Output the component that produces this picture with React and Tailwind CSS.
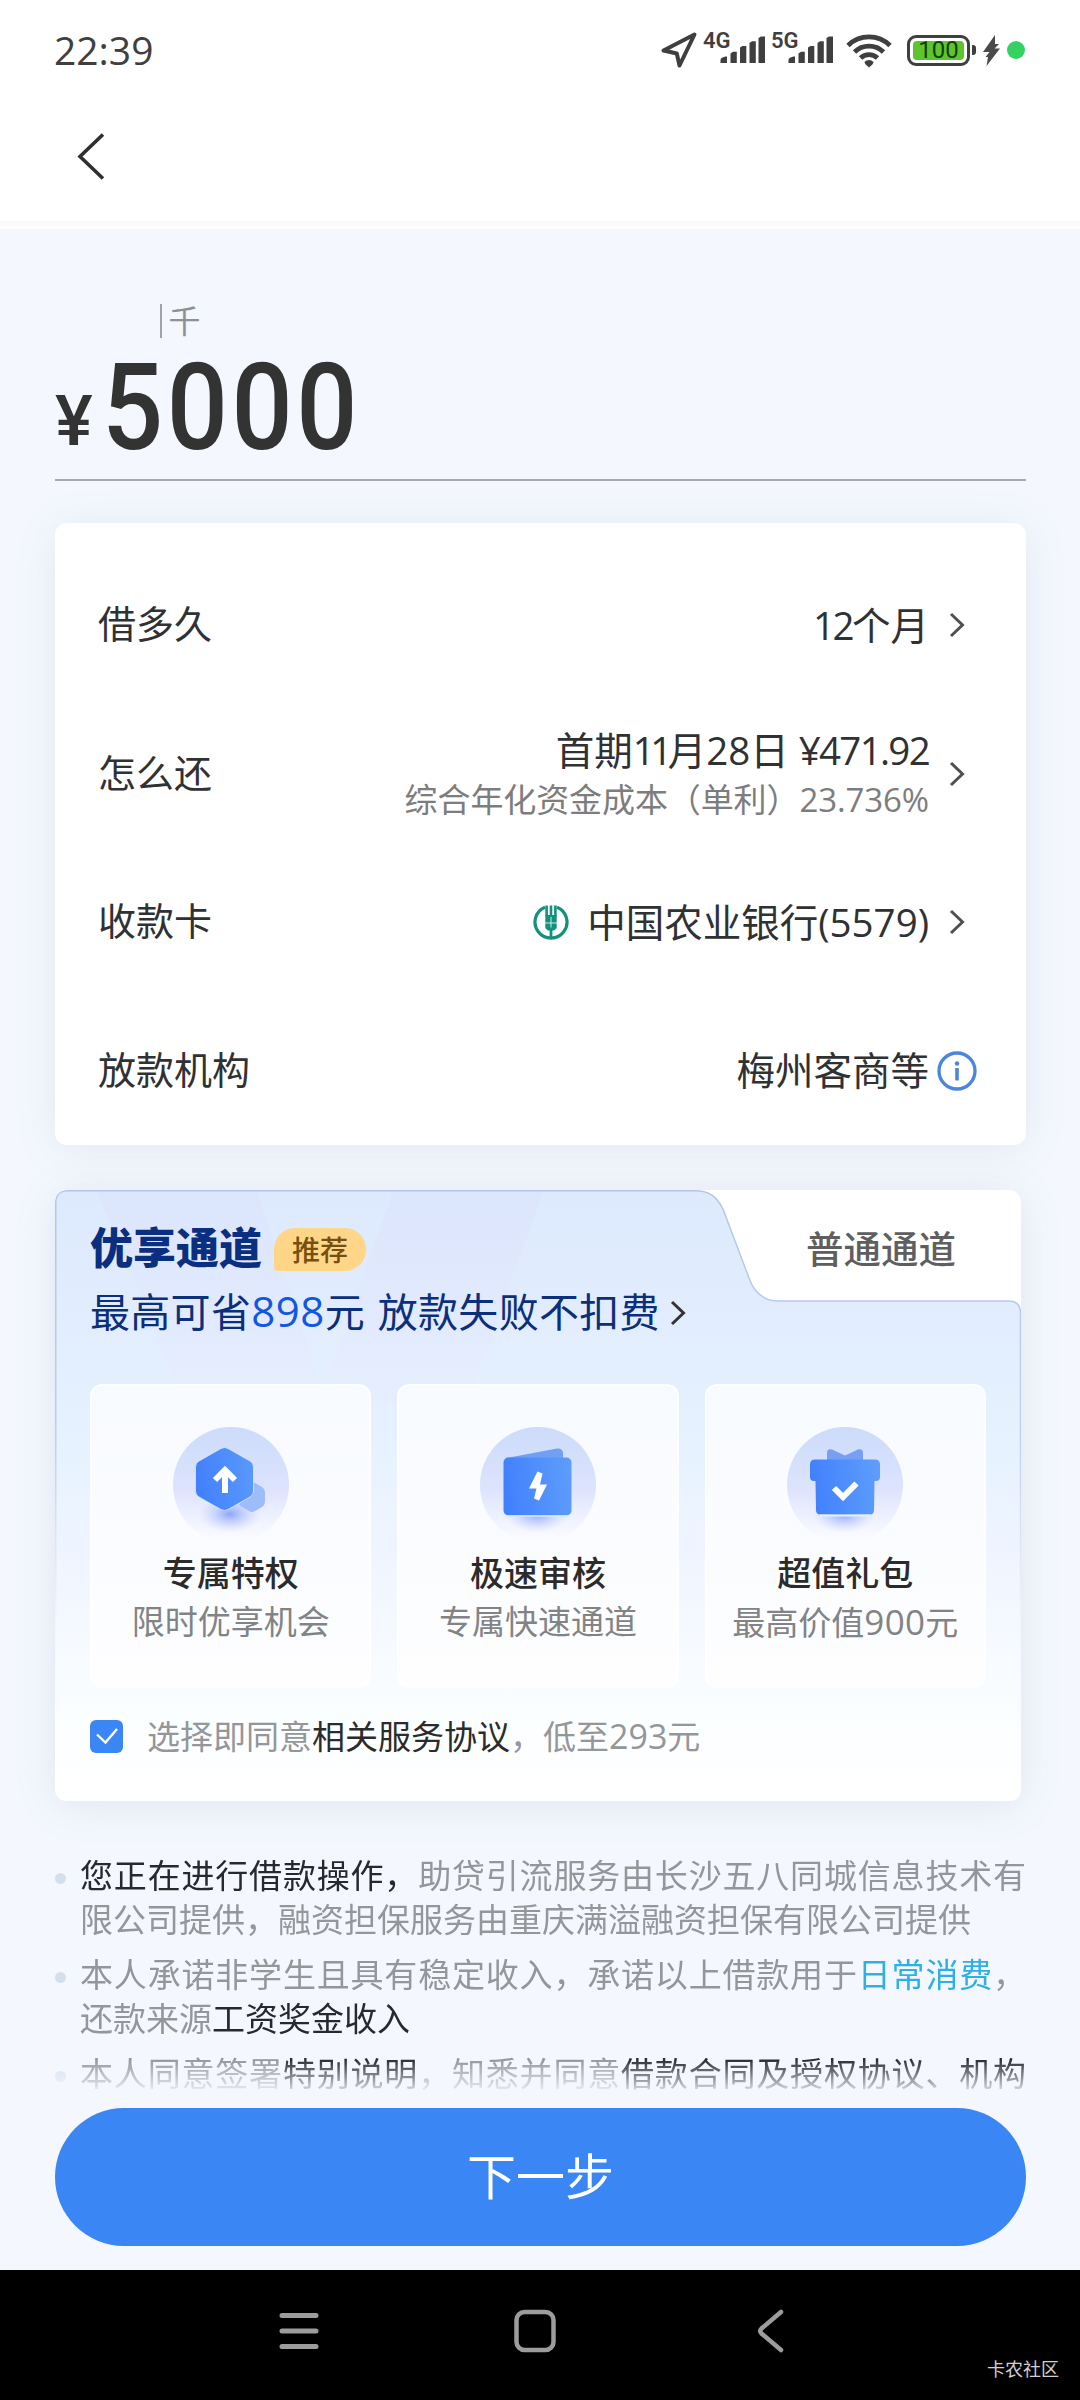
import { useState } from "react";

const terms = [
  {
    label: "借多久",
    value: (
      <>
        <span className="tracking-[-2.500px]">12</span>个月
      </>
    ),
  },
  {
    label: "怎么还",
    value: (
      <>
        首期<span className="tracking-[-4.500px]">11</span>月28日 <span className="tracking-[-1.700px]">¥471.92</span>
      </>
    ),
    note: "综合年化资金成本（单利）23.736%",
  },
  { label: "收款卡", value: "中国农业银行(5579)", bank: true },
  { label: "放款机构", value: "梅州客商等", info: true },
];

const perks = [
  { title: "专属特权", desc: "限时优享机会", Icon: UpgradeIcon },
  { title: "极速审核", desc: "专属快速通道", Icon: FlashIcon },
  {
    title: "超值礼包",
    desc: (
      <>
        最高价值<span className="text-[35px] tracking-[0.300px]">900</span>元
      </>
    ),
    Icon: GiftIcon,
  },
];

function Chevron({ className }) {
  return (
    <svg className={className} width="16" height="26" viewBox="0 0 16 26" fill="none">
      <path d="M2 2l11.500 11L2 24" stroke="currentColor" strokeWidth="3" />
    </svg>
  );
}

function SignalIcon() {
  return (
    <svg width="46" height="28" viewBox="0 0 46 28" fill="#3f3f3f">
      <path d="M.5 27v-3q0-2 2-2.600l3-.8h1.500V27z" />
      <path d="M10.500 27V17.500l2.500-1.700h3.800V27z" />
      <path d="M20 27V11.500L22.500 10h3.800v17z" />
      <path d="M29.500 27V7L32 5.300h3.800V27z" />
      <path d="M38.500 27V2L41 .5h4V27z" />
    </svg>
  );
}

function StatusBar() {
  return (
    <div className="flex h-[100px] items-center justify-between pl-[54px] pr-[55px] text-[#3f3f3f]">
      <span className="mb-[2px] text-[39px] leading-none font-medium">22:39</span>
      <div className="flex items-center">
        <svg width="38" height="38" viewBox="0 0 38 38" fill="none" className="mr-[5px]">
          <path d="M34.500 3.500L3.500 19.500l13.300 3L19.500 34.500z" stroke="#3f3f3f" strokeWidth="4" strokeLinejoin="round" />
        </svg>
        <span className="mb-[19px] -mr-[12px] w-[29px] font-['Roboto',sans-serif] text-[22px] leading-none font-semibold">
          4G
        </span>
        <SignalIcon />
        <span className="mb-[19px] ml-[5px] -mr-[12px] w-[29px] font-['Roboto',sans-serif] text-[22px] leading-none font-semibold">
          5G
        </span>
        <SignalIcon />
        <svg width="46" height="36" viewBox="0 0 46 36" fill="none" className="ml-[12px]">
          <g stroke="#3f3f3f" strokeWidth="4.800">
            <path d="M2 13.500a30 30 0 0 1 42 0" />
            <path d="M8.500 20a21 21 0 0 1 29 0" />
            <path d="M14.500 26a12.500 12.500 0 0 1 17 0" />
          </g>
          <path d="M18.500 30a6 6 0 0 1 9 0q0 2-4.500 5.500q-4.500-3.500-4.500-5.500z" fill="#3f3f3f" />
        </svg>
        <div className="ml-[15px] flex h-[31px] w-[63px] items-center rounded-[9px] border-[3.500px] border-[#3f3f3f] p-[3px]">
          <div className="flex h-full w-full items-center justify-center rounded-[4px] bg-[#5fc52e] font-['Roboto',sans-serif] text-[24px] leading-none text-[#123f08]">
            100
          </div>
        </div>
        <div className="ml-[2px] h-[10px] w-[4px] rounded-r-[3px] bg-[#3f3f3f]" />
        <svg width="18" height="31" viewBox="0 0 18 31" className="ml-[7px]">
          <path d="M12 0L0 17h6.500L2.500 22h2.500L3.500 31L17 13.500h-5.500L16 9h-4z" fill="#4a4a4a" />
        </svg>
        <div className="ml-[6px] size-[18px] rounded-full bg-[#34d263]" />
      </div>
    </div>
  );
}

function BankLogo() {
  return (
    <svg width="36" height="36" viewBox="0 0 36 36" fill="none" className="mr-[18px]">
      <path d="M12 3.200a16 16 0 1 0 12 0" stroke="#12917b" strokeWidth="3.200" />
      <path d="M18 22v12" stroke="#12917b" strokeWidth="2.800" />
      <path d="M12.300 1.500h2.600v10.500h-2.600zM16.700 1.500h2.600v10.500h-2.600zM21.100 1.500h2.600v10.500h-2.600z" fill="#12917b" />
      <path d="M12.300 11h11.400v13l-2.500 2.500h-6.400l-2.500-2.500z" fill="#12917b" />
      <path d="M12 19h12M18 13v10.500" stroke="#e8f6f3" strokeWidth="0.900" />
    </svg>
  );
}

function InfoIcon() {
  return (
    <svg width="40" height="40" viewBox="0 0 40 40" fill="none" className="-mr-px ml-[8px]">
      <circle cx="20" cy="20" r="18" stroke="#4a86dc" strokeWidth="3.300" />
      <circle cx="20" cy="12.500" r="2.200" fill="#4a86dc" />
      <path d="M20 17v12.500" stroke="#4a86dc" strokeWidth="3.600" />
    </svg>
  );
}

function IconBase({ id, children }) {
  return (
    <svg width="116" height="116" viewBox="0 0 116 116" fill="none">
      <defs>
        <linearGradient id={`${id}-disc`} x1="58" y1="0" x2="58" y2="112" gradientUnits="userSpaceOnUse">
          <stop stopColor="#cbdcfa" />
          <stop offset="0.550" stopColor="#dde3fd" />
          <stop offset="1" stopColor="#fbfcff" />
        </linearGradient>
        <linearGradient id={`${id}-face`} x1="24" y1="60" x2="92" y2="50" gradientUnits="userSpaceOnUse">
          <stop stopColor="#4180fd" />
          <stop offset="1" stopColor="#5e9dfb" />
        </linearGradient>
        <radialGradient id={`${id}-glow`}>
          <stop stopColor="#8ea5fb" />
          <stop offset="1" stopColor="#c9d3fd" stopOpacity="0" />
        </radialGradient>
      </defs>
      <circle cx="58" cy="58" r="58" fill={`url(#${id}-disc)`} />
      <ellipse cx="57" cy="87" rx="32" ry="19" fill={`url(#${id}-glow)`} />
      {children}
    </svg>
  );
}

function UpgradeIcon() {
  return (
    <IconBase id="upgrade">
      <path d="M80 55l9 5q3 2 3 5v9q0 4-3 6l-7 4q-3 2-6 0l-10-6z" fill="#9dbcfa" />
      <path
        d="M48 21.500q3.500-2 7 0l22 12.500q3.500 2 3.500 6v24q0 4-3.500 6l-22 12.500q-3.500 2-7 0L26 70q-3.500-2-3.500-6V40q0-4 3.500-6z"
        fill="url(#upgrade-face)"
        stroke="#d9e8ff"
        strokeWidth="0.800"
      />
      <path d="M52 66V45M42 53l10-10l10 10" stroke="#fff" strokeWidth="6" />
    </IconBase>
  );
}

function FlashIcon() {
  return (
    <IconBase id="flash">
      <path d="M26 31l51-9.500q5-.5 6 4V40H26z" fill="#719ff3" />
      <rect x="23.500" y="30.500" width="68" height="58" rx="5" fill="url(#flash-face)" />
      <path d="M27 89h61" stroke="#dcebff" strokeWidth="1.500" />
      <path d="M57.500 44.500l5 2l-2.500 11h7L59 73.500l-5-2l2.500-10H49z" fill="#fff" />
    </IconBase>
  );
}

function GiftIcon() {
  return (
    <IconBase id="gift">
      <path d="M40 33V26q0-5 5-3.500l13 6l13-6q5-1.500 5 3.500v7z" fill="#769ff5" />
      <path
        d="M28 32.500h60q5 0 5 5V50q0 4-4 4h-1.500l-.5 29q0 4.500-4.500 4.500h-49q-4.500 0-4.500-4.500L28.500 54H27q-4 0-4-4V37.500q0-5 5-5z"
        fill="url(#gift-face)"
      />
      <path d="M33 88.500h50" stroke="#e4f3ff" strokeWidth="2" />
      <path d="M47 61l9 9l13.500-13.500" stroke="#fff" strokeWidth="6" />
    </IconBase>
  );
}

// Folder-shaped background: the active tab flows into the body of the panel
function PanelShape() {
  const outline =
    "M.75 611V12.750q0-12 12-12H640C655 .75 662 7 668 19L694 88Q702 111 724 111H953q12.500 0 12.500 12V611";
  return (
    <svg className="absolute inset-0" width="966" height="611" viewBox="0 0 966 611" fill="none">
      <defs>
        <linearGradient id="panel-fill" x1="0" y1="0" x2="0" y2="611" gradientUnits="userSpaceOnUse">
          <stop stopColor="#dde9fd" />
          <stop offset="0.420" stopColor="#e6f2ff" />
          <stop offset="0.650" stopColor="#f2f6ff" />
          <stop offset="0.850" stopColor="#fbfeff" />
          <stop offset="1" stopColor="#ffffff" />
        </linearGradient>
        <linearGradient id="panel-line" x1="0" y1="0" x2="0" y2="611" gradientUnits="userSpaceOnUse">
          <stop stopColor="#b3c6e4" />
          <stop offset="0.400" stopColor="#bccfee" />
          <stop offset="0.700" stopColor="#f0f5ff" />
          <stop offset="0.900" stopColor="#ffffff" />
        </linearGradient>
        <linearGradient id="panel-ray" x1="0" y1="0" x2="0" y2="215" gradientUnits="userSpaceOnUse">
          <stop stopColor="#dae2fc" />
          <stop offset="1" stopColor="#e7edfe" />
        </linearGradient>
      </defs>
      <path d={outline} fill="url(#panel-fill)" />
      <path d="M42 2H202L272 215H130z" fill="url(#panel-ray)" fillOpacity="0.600" />
      <path d="M338 2H488L412 215H262z" fill="url(#panel-ray)" fillOpacity="0.600" />
      <path d={outline} stroke="url(#panel-line)" strokeWidth="1.500" />
    </svg>
  );
}

function Notice({ lines }) {
  return (
    <li className="mb-[11px] flex items-start text-[33px] leading-[44px] text-[#949699]">
      <span className="mt-[19px] mr-[14px] size-[11px] shrink-0 rounded-full bg-[#d5dfec]" />
      <div className="flex-1 whitespace-nowrap">{lines}</div>
    </li>
  );
}

export default function App() {
  const [agreed, setAgreed] = useState(true);

  return (
    <div className="flex h-[2400px] w-[1080px] flex-col overflow-hidden bg-white font-['Open_Sans','Noto_Sans_CJK_SC',sans-serif] text-[#303133]">
      <StatusBar />
      <header className="h-[121px] pt-[32px] pl-[76px]">
        <svg width="30" height="50" viewBox="0 0 30 50" fill="none">
          <path d="M27 2.500L4 24.500L27 46.500" stroke="#303030" strokeWidth="3.600" />
        </svg>
      </header>
      <div className="h-[8px] bg-linear-to-b from-[#f8f8fa] to-white" />

      <main className="flex min-h-0 flex-1 flex-col bg-[#f4f8fe] pr-[54px] pl-[55px]">
        {/* Loan amount */}
        <section className="flex h-[252px] flex-col border-b-2 border-[#a5a8ae] pt-[70px]">
          <div className="ml-[105px] flex h-[44px] items-center text-[32px] leading-none text-[#8d9094]">
            <span className="mr-[7px] h-[34px] w-[1.500px] bg-[#a0a3a8]" />千
          </div>
          <div className="mt-[15px] flex items-baseline font-['Roboto',sans-serif] font-medium leading-[100px] text-[#333]">
            <span className="relative -top-[4px] inline-block w-[47px] text-[71px]">¥</span>
            <span className="inline-block origin-left scale-x-[0.890] text-[121px] tracking-[4px]">5000</span>
          </div>
        </section>

        {/* Loan terms */}
        <section className="mt-[42px] rounded-[12px] bg-white pt-[28px] pr-[50px] pl-[43px] shadow-[0_4px_44px_rgba(80,90,130,0.100)]">
          {terms.map((term) => (
            <div key={term.label} className="flex h-[148.500px] items-center justify-between">
              <span className="pb-[4px] text-[38px] leading-none">{term.label}</span>
              <div className="flex items-center">
                {term.bank && <BankLogo />}
                <div className="flex flex-col items-end">
                  <span className="text-[38.500px] leading-[49px]">{term.value}</span>
                  {term.note && (
                    <span className="-mb-[2px] text-[33px] leading-[49px] tracking-[-0.100px] text-[#7d7d7d]">{term.note}</span>
                  )}
                </div>
                {term.info ? <InfoIcon /> : <Chevron className="mr-[11px] ml-[20px] text-[#505050]" />}
              </div>
            </div>
          ))}
        </section>

        {/* Channel panel */}
        <section className="relative mt-[45px] h-[611px] w-[966px] shrink-0 overflow-hidden rounded-[12px] bg-white shadow-[0_4px_44px_rgba(80,90,130,0.120)]">
          <PanelShape />
          <div className="relative px-[35px]">
            <div className="flex h-[194px] items-start justify-between">
              <div className="pt-[34px]">
                <div className="flex h-[50px] items-center">
                  <h2 className="pb-[4px] text-[43px] leading-none font-black text-[#0b2f80]">优享通道</h2>
                  <span className="mt-px ml-[12px] flex h-[43px] w-[92px] items-center justify-center rounded-[21px] rounded-bl-[4px] bg-[#ffd588] text-[28px] leading-none font-medium text-[#76500f]">
                    推荐
                  </span>
                </div>
                <div className="mt-[11px] flex h-[52px] items-center text-[40px] leading-none tracking-[0.300px] text-[#0b2f7a]">
                  <span>
                    最高可省<span className="text-[42px] tracking-[0.500px] text-[#1257e0]">898</span>元
                    <span className="ml-[2px]"> 放款失败不扣费</span>
                  </span>
                  <Chevron className="mt-[4px] ml-[10px] text-[#333]" />
                </div>
              </div>
              <div className="mt-[36px] mr-[30px] text-[37.500px] leading-[46px] font-medium text-[#5f5f5f]">普通通道</div>
            </div>

            <div className="grid grid-cols-3 gap-[26px]">
              {perks.map(({ title, desc, Icon }) => (
                <div
                  key={title}
                  className="flex h-[304px] flex-col items-center rounded-[12px] border-2 border-white/80 bg-linear-to-b from-[#f7faff] to-[#fefeff] pt-[41px]"
                >
                  <Icon />
                  <p className="mt-[5px] text-[34px] leading-[50px] font-medium text-[#2b2b2b]">{title}</p>
                  <p className="text-[33px] leading-[48px] text-[#828385]">{desc}</p>
                </div>
              ))}
            </div>

            <label className="mt-[23px] flex h-[50px] items-center text-[33px] leading-none text-[#949699]">
              <input
                type="checkbox"
                className="peer sr-only"
                checked={agreed}
                onChange={(e) => setAgreed(e.target.checked)}
              />
              <span className="mr-[24px] flex size-[33px] items-center justify-center rounded-[6px] bg-[#3a86f5]">
                {agreed && (
                  <svg width="24" height="18" viewBox="0 0 24 18" fill="none">
                    <path d="M2 7.500l8.500 8L22 2" stroke="#fff" strokeWidth="2.400" />
                  </svg>
                )}
              </span>
              <span>
                选择即同意<span className="text-[#2b2b2b]">相关服务协议</span>，低至<span className="text-[34px]">293</span>元
              </span>
            </label>
          </div>
        </section>

        {/* Legal notes, fading out above the button */}
        <ul className="mt-[53px] min-h-0 flex-1 overflow-hidden mask-[linear-gradient(to_bottom,black_205px,transparent_242px)]">
          <Notice
            lines={
              <>
                <div className="[text-align-last:justify]">
                  <span className="text-[#27292d]">您正在进行借款操作，</span>助贷引流服务由长沙五八同城信息技术有
                </div>
                <div>限公司提供，融资担保服务由重庆满溢融资担保有限公司提供</div>
              </>
            }
          />
          <Notice
            lines={
              <>
                <div className="[text-align-last:justify]">
                  本人承诺非学生且具有稳定收入，承诺以上借款用于<span className="text-[#30afe6]">日常消费</span>，
                </div>
                <div>
                  还款来源<span className="text-[#27292d]">工资奖金收入</span>
                </div>
              </>
            }
          />
          <Notice
            lines={
              <div className="[text-align-last:justify]">
                本人同意签署<span className="text-[#27292d]">特别说明</span>，知悉并同意
                <span className="text-[#27292d]">借款合同及授权协议、机构</span>
              </div>
            }
          />
        </ul>
        <button className="mb-[24px] h-[138px] shrink-0 rounded-full bg-[#3a86f5] pb-[2px] text-[49px] leading-none text-white">
          下一步
        </button>
      </main>

      {/* System navigation */}
      <nav className="flex h-[130px] shrink-0 items-start bg-black pt-[38px] pl-[278px]">
        <svg width="42" height="46" viewBox="0 0 42 46" fill="none">
          <path d="M4 7.500h34M4 23h34M4 38.500h34" stroke="#9c9c9c" strokeWidth="5" strokeLinecap="round" />
        </svg>
        <svg width="46" height="46" viewBox="0 0 46 46" fill="none" className="ml-[192px]">
          <rect x="4.500" y="4" width="37" height="38" rx="8" stroke="#9c9c9c" strokeWidth="4.500" />
        </svg>
        <svg width="34" height="46" viewBox="0 0 34 46" fill="none" className="ml-[196px]">
          <path d="M27 4L7.500 20.500q-2.500 2.500 0 5L27 42" stroke="#9c9c9c" strokeWidth="4.500" strokeLinecap="round" />
        </svg>
        <span className="mt-[49px] mr-[21px] ml-auto text-[18px] leading-[24px] text-[#d0d0d0]">卡农社区</span>
      </nav>
    </div>
  );
}
